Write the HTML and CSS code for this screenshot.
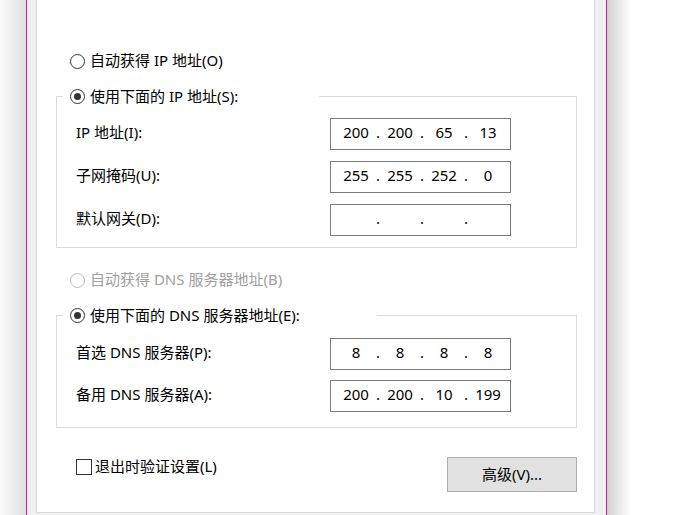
FILE: index.html
```html
<!DOCTYPE html>
<html lang="zh-CN">
<head>
<meta charset="utf-8">
<title>Internet 协议版本 4 (TCP/IPv4) 属性</title>
<link rel="stylesheet" href="styles.css">
</head>
<body>
<div class="desk">
  <div class="shadow-left"></div>
  <div class="window">
    <div class="panel">
      <label class="choice"><span class="radio"></span><span class="txt">自动获得 IP 地址(O)</span></label>

      <fieldset class="group group-ip">
        <legend class="legend legend-ip"><span class="radio checked"></span><span class="txt">使用下面的 IP 地址(S):</span></legend>
        <div class="rows rows-ip">
          <div class="row">
            <span class="label">IP 地址(I):</span>
            <div class="ipbox"><span class="oct">200</span><span class="dot">.</span><span class="oct">200</span><span class="dot">.</span><span class="oct">65</span><span class="dot">.</span><span class="oct">13</span></div>
          </div>
          <div class="row">
            <span class="label">子网掩码(U):</span>
            <div class="ipbox"><span class="oct">255</span><span class="dot">.</span><span class="oct">255</span><span class="dot">.</span><span class="oct">252</span><span class="dot">.</span><span class="oct">0</span></div>
          </div>
          <div class="row">
            <span class="label">默认网关(D):</span>
            <div class="ipbox"><span class="oct"></span><span class="dot">.</span><span class="oct"></span><span class="dot">.</span><span class="oct"></span><span class="dot">.</span><span class="oct"></span></div>
          </div>
        </div>
      </fieldset>

      <label class="choice disabled"><span class="radio"></span><span class="txt">自动获得 DNS 服务器地址(B)</span></label>

      <fieldset class="group group-dns">
        <legend class="legend legend-dns"><span class="radio checked"></span><span class="txt">使用下面的 DNS 服务器地址(E):</span></legend>
        <div class="rows rows-dns">
          <div class="row">
            <span class="label">首选 DNS 服务器(P):</span>
            <div class="ipbox"><span class="oct">8</span><span class="dot">.</span><span class="oct">8</span><span class="dot">.</span><span class="oct">8</span><span class="dot">.</span><span class="oct">8</span></div>
          </div>
          <div class="row">
            <span class="label">备用 DNS 服务器(A):</span>
            <div class="ipbox"><span class="oct">200</span><span class="dot">.</span><span class="oct">200</span><span class="dot">.</span><span class="oct">10</span><span class="dot">.</span><span class="oct">199</span></div>
          </div>
        </div>
      </fieldset>

      <div class="footer">
        <label class="check"><span class="box"></span><span class="txt">退出时验证设置(L)</span></label>
        <button class="btn" type="button"><span class="txt">高级(V)...</span></button>
      </div>
    </div>
  </div>
  <div class="shadow-right"></div>
</div>
</body>
</html>
```

FILE: styles.css
```css
* {
  box-sizing: border-box;
}

html,
body {
  margin: 0;
}

body {
  width: 694px;
  height: 515px;
  overflow: hidden;
  background: #ffffff;
  font-family: "Noto Sans", "Noto Sans CJK SC", sans-serif;
  font-size: 15px;
  line-height: 20px;
  color: #000000;
}

.desk {
  display: flex;
  height: 515px;
}

.shadow-left {
  flex: none;
  width: 26px;
  background: linear-gradient(to right, #fbfbfb, #e0e0e0);
}

.window {
  flex: none;
  width: 581px;
  border-left: 1px solid #e3148f;
  border-right: 1px solid #e3148f;
  background: #f0f0f0;
  padding: 0 11px 3px 9px;
  display: flex;
  flex-direction: column;
}

.shadow-right {
  flex: none;
  width: 24px;
  background: linear-gradient(to right, #d2d2d2, #ffffff);
}

.panel {
  background: #ffffff;
  border: 1px solid #d9d9d9;
  border-top: none;
  padding: 51px 17px 20px 19px;
  display: flex;
  flex-direction: column;
}

.txt {
  display: block;
  line-height: 18px;
  padding-bottom: 2px;
}

.choice {
  display: flex;
  align-items: center;
  gap: 5px;
  height: 20px;
  margin-left: 14px;
  white-space: nowrap;
}

.choice.disabled {
  margin-top: 22px;
  color: #a0a0a0;
}

.radio {
  flex: none;
  width: 15px;
  height: 15px;
  border: 1px solid #333333;
  border-radius: 50%;
  display: flex;
  align-items: center;
  justify-content: center;
  background: #ffffff;
}

.disabled .radio {
  border-color: #bcbcbc;
}

.radio.checked::after {
  content: "";
  width: 7px;
  height: 7px;
  border-radius: 50%;
  background: #333333;
}

.group {
  margin: 15px 0 0;
  border: 1px solid #dcdcdc;
  min-width: 0;
}

.group-ip {
  padding: 11px 0 11px;
}

.group-dns {
  padding: 12px 0 15px;
}

.legend {
  display: flex;
  align-items: center;
  gap: 5px;
  height: 21px;
  margin-left: 6px;
  padding: 0 0 0 7px;
  background: #ffffff;
  white-space: nowrap;
}

.legend-ip {
  width: 256px;
}

.legend-dns {
  width: 314px;
}

.rows {
  display: flex;
  flex-direction: column;
  padding-left: 19px;
}

.rows-ip {
  gap: 11px;
}

.rows-dns {
  gap: 10px;
}

.row {
  display: grid;
  grid-template-columns: 254px 181px;
  align-items: center;
}

.label {
  padding-bottom: 4px;
}

.ipbox {
  height: 32px;
  border: 1px solid #7a7a7a;
  background: #ffffff;
  display: flex;
  align-items: center;
  padding: 0 4px 4px 8px;
}

.oct {
  width: 34px;
  text-align: center;
}

.dot {
  width: 10px;
  text-align: center;
}

.footer {
  margin-top: 29px;
  display: flex;
  justify-content: space-between;
  align-items: flex-start;
  padding-left: 20px;
}

.check {
  display: flex;
  align-items: center;
  gap: 3px;
  height: 16px;
  margin-top: 2px;
  white-space: nowrap;
}

.box {
  flex: none;
  width: 16px;
  height: 16px;
  border: 1px solid #333333;
  background: #ffffff;
}

.btn {
  width: 130px;
  height: 35px;
  padding: 0;
  border: 1px solid #adadad;
  background: #e1e1e1;
  color: #000000;
  font-family: inherit;
  font-size: 15px;
  line-height: 20px;
  display: flex;
  align-items: center;
  justify-content: center;
}
```
